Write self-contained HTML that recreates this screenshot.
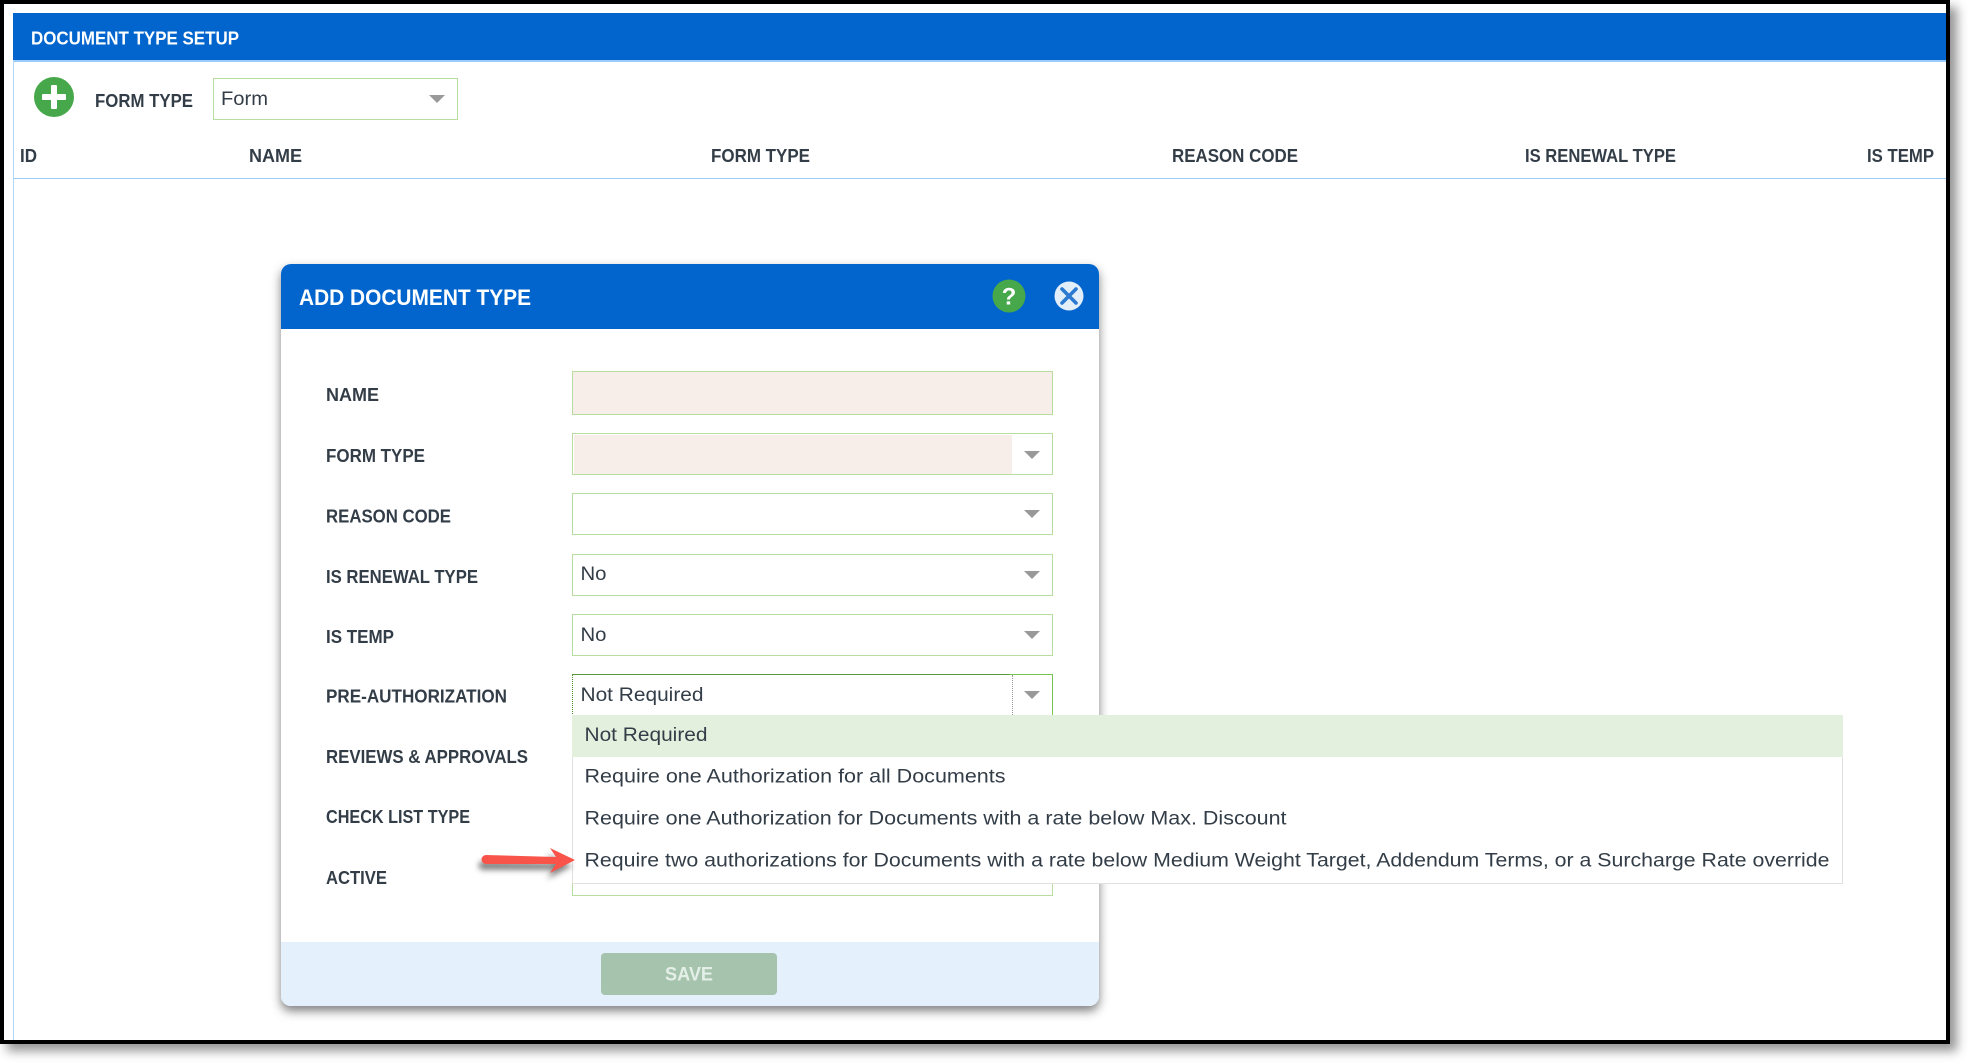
<!DOCTYPE html>
<html>
<head>
<meta charset="utf-8">
<title>Document Type Setup</title>
<style>
html,body{margin:0;padding:0;background:#fff;width:1970px;height:1064px;overflow:hidden}
.a{position:absolute;box-sizing:border-box}
#frame{left:0;top:0;width:1950px;height:1044px;border:4px solid #000;background:#fff;box-shadow:7px 7px 10px rgba(0,0,0,.42)}
.f{border:1.5px solid #b7de9e;background:#fff}
svg{position:absolute;left:0;top:0}
text{font-family:"Liberation Sans",sans-serif;fill:#333d47}
.b{font-weight:700;font-size:18px}
.r{font-size:19.5px}
</style>
</head>
<body>
<div class="a" id="frame"></div>
<div class="a" style="left:13px;top:13px;width:1933px;height:47px;background:#0265cd"></div>
<div class="a" style="left:13px;top:60px;width:1933px;height:1.5px;background:#9ccbfa"></div>
<div class="a" style="left:13px;top:60px;width:1px;height:980px;background:#b5d8fb"></div>
<div class="a" style="left:13px;top:177.500px;width:1933px;height:1.5px;background:#9ccbfa"></div>
<div class="a f" style="left:213px;top:78px;width:245px;height:42px"></div>

<div class="a" style="left:281px;top:264px;width:818px;height:742px;background:#fff;border-radius:10px;box-shadow:0 5px 10px rgba(0,0,0,.5)"></div>
<div class="a" style="left:281px;top:264px;width:818px;height:65px;background:#0265cd;border-radius:10px 10px 0 0"></div>
<div class="a" style="left:281px;top:942px;width:818px;height:64px;background:#e4f1fd;border-radius:0 0 10px 10px"></div>
<div class="a" style="left:601px;top:953px;width:176px;height:42px;background:#a6c3ad;border-radius:4px"></div>

<div class="a f" style="left:572px;top:371px;width:481px;height:44px;background:#f8eee9"></div>
<div class="a f" style="left:572px;top:433px;width:481px;height:42px"></div>
<div class="a" style="left:574px;top:435px;width:438px;height:39px;background:#f8eee9"></div>
<div class="a f" style="left:572px;top:493px;width:481px;height:42px"></div>
<div class="a f" style="left:572px;top:554px;width:481px;height:42px"></div>
<div class="a f" style="left:572px;top:614px;width:481px;height:42px"></div>
<div class="a f" style="left:572px;top:850px;width:481px;height:46px"></div>
<div class="a" style="left:572px;top:674px;width:481px;height:50px;background:#fff;border:1.5px dotted #4e8f2e;border-right:1.5px solid #77c453;border-bottom:0"></div>
<div class="a" style="left:572px;top:674px;width:481px;height:1px;background:linear-gradient(90deg,#5a9a3a 91%,#77c453 91%)"></div>
<div class="a" style="left:1012px;top:675px;width:0;height:42px;border-left:1px dotted #999"></div>

<div class="a" style="left:572px;top:715px;width:1271px;height:169px;background:#fff;border:1.5px solid #e0e0e0;border-top:0"></div>
<div class="a" style="left:572px;top:715px;width:1271px;height:42px;background:#e4f0de"></div>

<svg width="1970" height="1064" viewBox="0 0 1970 1064" xmlns="http://www.w3.org/2000/svg">
<defs>
<filter id="sh" x="-30%" y="-60%" width="160%" height="240%"><feGaussianBlur stdDeviation="3"/></filter>
</defs>
<text x="31" y="44.500" class="b" textLength="208" lengthAdjust="spacingAndGlyphs" style="fill:#fff">DOCUMENT TYPE SETUP</text>

<circle cx="54" cy="97" r="20" fill="#46a84a"/>
<rect x="42" y="94" width="24" height="6" rx="1" fill="#fff"/>
<rect x="51" y="85" width="6" height="24" rx="1" fill="#fff"/>

<text x="95" y="107" class="b" textLength="98" lengthAdjust="spacingAndGlyphs">FORM TYPE</text>
<text x="221" y="105" class="r" textLength="47" lengthAdjust="spacingAndGlyphs">Form</text>
<polygon points="429,95 445,95 437,103" fill="#999"/>

<text x="20" y="162" class="b" textLength="17" lengthAdjust="spacingAndGlyphs">ID</text>
<text x="249" y="162" class="b" textLength="53" lengthAdjust="spacingAndGlyphs">NAME</text>
<text x="711" y="162" class="b" textLength="99" lengthAdjust="spacingAndGlyphs">FORM TYPE</text>
<text x="1172" y="162" class="b" textLength="126" lengthAdjust="spacingAndGlyphs">REASON CODE</text>
<text x="1525" y="162" class="b" textLength="151" lengthAdjust="spacingAndGlyphs">IS RENEWAL TYPE</text>
<text x="1867" y="162" class="b" textLength="67" lengthAdjust="spacingAndGlyphs">IS TEMP</text>

<text x="299" y="305" font-size="22" font-weight="700" textLength="232" lengthAdjust="spacingAndGlyphs" style="fill:#fff">ADD DOCUMENT TYPE</text>
<circle cx="1009" cy="296" r="16.5" fill="#46a84a"/>
<text x="1009" y="304.500" text-anchor="middle" font-size="24" font-weight="700" style="fill:#fff">?</text>
<circle cx="1069" cy="296" r="14.500" fill="#e2eef9"/>
<path d="M1062 289 L1076 303 M1076 289 L1062 303" stroke="#2b79d0" stroke-width="3.600" stroke-linecap="round" fill="none"/>

<text x="326" y="401" class="b" textLength="53" lengthAdjust="spacingAndGlyphs">NAME</text>
<text x="326" y="462" class="b" textLength="99" lengthAdjust="spacingAndGlyphs">FORM TYPE</text>
<text x="326" y="522.500" class="b" textLength="125" lengthAdjust="spacingAndGlyphs">REASON CODE</text>
<text x="326" y="583" class="b" textLength="152" lengthAdjust="spacingAndGlyphs">IS RENEWAL TYPE</text>
<text x="326" y="643" class="b" textLength="68" lengthAdjust="spacingAndGlyphs">IS TEMP</text>
<text x="326" y="702.500" class="b" textLength="181" lengthAdjust="spacingAndGlyphs">PRE-AUTHORIZATION</text>
<text x="326" y="763" class="b" textLength="202" lengthAdjust="spacingAndGlyphs">REVIEWS &amp; APPROVALS</text>
<text x="326" y="823" class="b" textLength="144" lengthAdjust="spacingAndGlyphs">CHECK LIST TYPE</text>
<text x="326" y="884" class="b" textLength="61" lengthAdjust="spacingAndGlyphs">ACTIVE</text>

<polygon points="1024,451 1040,451 1032,459" fill="#999"/>
<polygon points="1024,510 1040,510 1032,518" fill="#999"/>
<polygon points="1024,571 1040,571 1032,579" fill="#999"/>
<polygon points="1024,631 1040,631 1032,639" fill="#999"/>
<polygon points="1024,691 1040,691 1032,699" fill="#999"/>

<text x="580.500" y="580" class="r" textLength="26" lengthAdjust="spacingAndGlyphs">No</text>
<text x="580.500" y="641" class="r" textLength="26" lengthAdjust="spacingAndGlyphs">No</text>
<text x="580.500" y="701" class="r" textLength="123" lengthAdjust="spacingAndGlyphs">Not Required</text>

<text x="584.500" y="741" class="r" textLength="123" lengthAdjust="spacingAndGlyphs">Not Required</text>
<text x="584.500" y="782.500" class="r" textLength="421" lengthAdjust="spacingAndGlyphs">Require one Authorization for all Documents</text>
<text x="584.500" y="824.500" class="r" textLength="702" lengthAdjust="spacingAndGlyphs">Require one Authorization for Documents with a rate below Max. Discount</text>
<text x="584.500" y="866.500" class="r" textLength="1245" lengthAdjust="spacingAndGlyphs">Require two authorizations for Documents with a rate below Medium Weight Target, Addendum Terms, or a Surcharge Rate override</text>

<text x="665" y="980.500" font-size="19" font-weight="700" textLength="48" lengthAdjust="spacingAndGlyphs" style="fill:#e4efe7">SAVE</text>

<path d="M486 855 L556 857 L550 848 L575 860 L550 873 L556 864 L486 864 A4.500 4.500 0 0 1 486 855 Z" fill="#333" opacity=".6" transform="translate(-3,6)" filter="url(#sh)"/>
<path d="M486 855 L556 857 L550 848 L575 860 L550 873 L556 864 L486 864 A4.500 4.500 0 0 1 486 855 Z" fill="#f9544a"/>
</svg>
</body>
</html>
